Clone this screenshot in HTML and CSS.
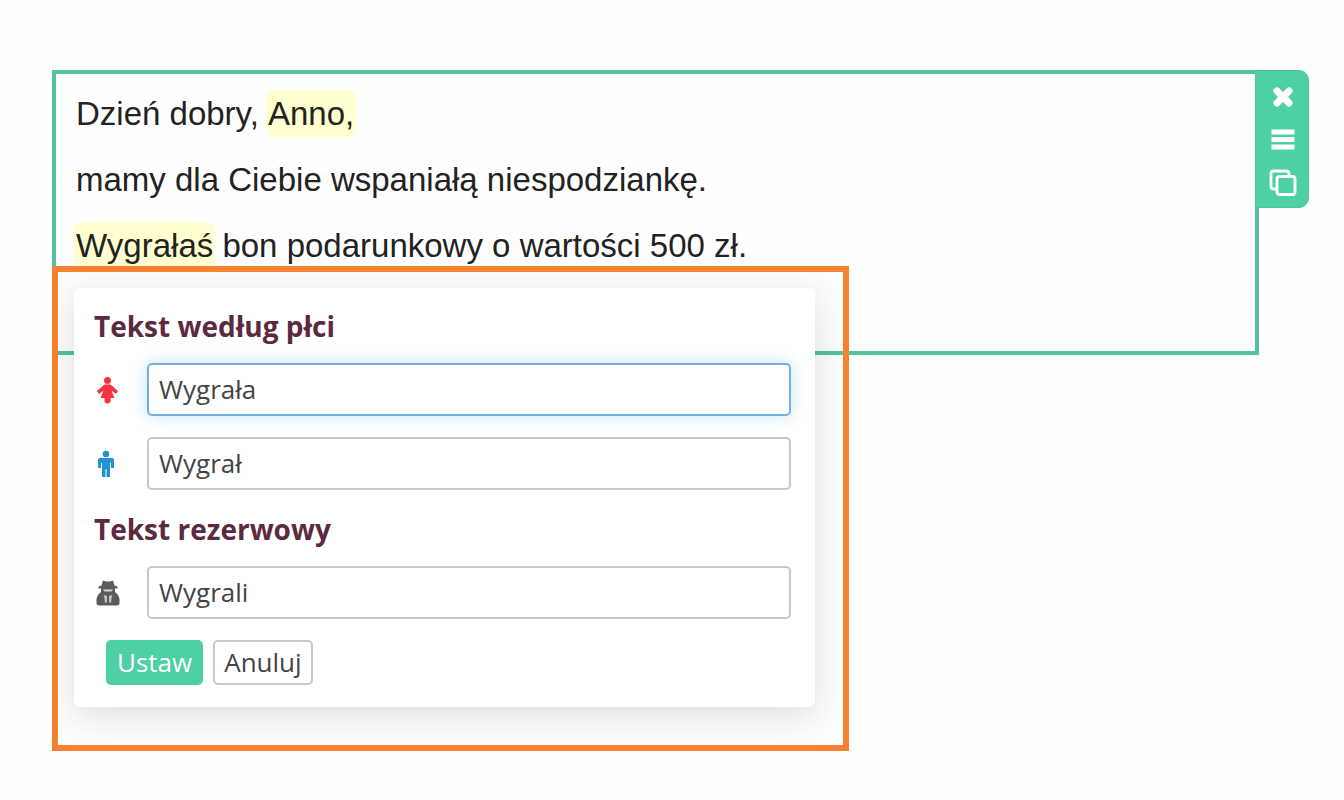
FILE: index.html
```
<!DOCTYPE html>
<html lang="pl">
<head>
    <meta charset="UTF-8">
    <meta name="viewport" content="width=device-width, initial-scale=1.0">
    <title>Tekst według płci</title>
    <link rel="stylesheet" href="styles.css">
</head>
<body>
    <main class="editor">
        <div class="block">
            <p>Dzień dobry, <mark>Anno,</mark></p>
            <p>mamy dla Ciebie wspaniałą niespodziankę.</p>
            <p><mark>Wygrałaś</mark> bon podarunkowy o wartości 500 zł.</p>
        </div>

        <div class="toolbar">
            <button type="button" aria-label="Usuń">
                <svg width="28" height="28" viewBox="0 0 28 28">
                    <path d="M8 8 20 20M20 8 8 20" stroke="#fff" stroke-width="7" stroke-linecap="round"/>
                </svg>
            </button>
            <button type="button" aria-label="Menu">
                <svg width="28" height="28" viewBox="0 0 28 28">
                    <path d="M2.5 6h23M2.5 13.5h23M2.5 21h23" stroke="#fff" stroke-width="5"/>
                </svg>
            </button>
            <button type="button" aria-label="Kopiuj">
                <svg width="28" height="28" viewBox="0 0 28 28" fill="none" stroke="#fff" stroke-width="2.8">
                    <path d="M7 20H4.500a2.500 2.500 0 0 1-2.500-2.500v-13A2.500 2.500 0 0 1 4.500 2h13A2.500 2.500 0 0 1 20 4.500V6"/>
                    <rect x="8" y="7.5" width="18" height="18" rx="2.5"/>
                </svg>
            </button>
        </div>

        <div class="frame">
            <form class="popup">
                <h2>Tekst według płci</h2>
                <div class="row">
                    <label for="female" aria-label="Kobieta">
                        <svg width="26" height="28" viewBox="0 0 26 28" fill="#f5333f">
                            <circle cx="13.5" cy="4.5" r="3.5"/>
                            <path d="M10.500 8.500h6l7.500 6.500-2 3-4.500-3.500L20.500 22h-4v4.500H15v1h-3v-1h-1.500V22h-4l3-7.500L5 18l-2-3z"/>
                        </svg>
                    </label>
                    <input type="text" id="female" class="active" value="Wygrała">
                </div>
                <div class="row">
                    <label for="male" aria-label="Mężczyzna">
                        <svg width="22" height="28" viewBox="0 0 22 28" fill="#2492cf">
                            <circle cx="12" cy="4" r="3.3"/>
                            <path d="M6 8h12q2 0 2 2v8h-3v-5h-1v14h-3.500v-8h-1v8H8V13H7v5H4v-8q0-2 2-2z"/>
                        </svg>
                    </label>
                    <input type="text" id="male" value="Wygrał">
                </div>
                <h2>Tekst rezerwowy</h2>
                <div class="row">
                    <label for="fallback" aria-label="Płeć nieznana">
                        <svg width="28" height="28" viewBox="0 0 28 28" fill="#5b5c5e">
                            <path d="M9 1.500 12 2.500h4l3-1 1.500 5 3 1v2h-19v-2l3-1z"/>
                            <path d="M7 9h14v4q4.500 3 4.500 8v3.500q0 2-2.500 2H5q-2.500 0-2.500-2V21q0-5 4.500-8z"/>
                            <path d="M9 10.500h10l-1.500 2h-7z" fill="#d4d4d4"/>
                            <path d="m10 16 3 1v6l-2 1zm8 0-3 1v6l2 1z" fill="#c4c4c4"/>
                        </svg>
                    </label>
                    <input type="text" id="fallback" value="Wygrali">
                </div>
                <div class="actions">
                    <button type="button" class="primary">Ustaw</button>
                    <button type="button">Anuluj</button>
                </div>
            </form>
        </div>
    </main>
</body>
</html>
```
FILE: styles.css
```
*{
    margin: 0;
    padding: 0;
    box-sizing: border-box;
}
body{
    background-color: #fefefe;
    min-height: 100vh;
    padding: 70px 85px 48px 52px;
}
.editor{
    position: relative;
}
.block{
    min-height: 285px;
    border: 4px solid #51c49c;
    padding: 7px 20px;
    font-family: "Liberation Sans", Arial, sans-serif;
    font-size: 33px;
    line-height: 66px;
    color: #222;
}
.block mark{
    background-color: #ffffcf;
    color: inherit;
    border-radius: 8px;
    padding: 5px 2px;
    margin: 0 -2px;
}
.toolbar{
    position: absolute;
    top: 0;
    left: calc(100% - 4px);
    display: flex;
    flex-direction: column;
    gap: 15px;
    padding: 12px 11px 10px 13px;
    background-color: #4dd0a5;
    border: 1px solid #48c79d;
    border-radius: 0 10px 10px 0;
}
.toolbar button{
    display: flex;
    background: none;
    border: none;
    cursor: pointer;
}
/* frame around the popup, overlaps the bottom of the text block */
.frame{
    position: relative;
    width: 66%;
    margin-top: -89px;
    border: 6px solid #f58230;
    padding: 16px 28px 38px 16px;
    overflow: hidden;
}
.popup{
    background-color: #fff;
    border-radius: 6px;
    box-shadow: 0 8px 36px rgba(0, 0, 0, 0.14);
    padding: 20px 24px 22px 20px;
    font-family: "Open Sans", sans-serif;
    color: #444;
}
.popup h2{
    font-size: 28px;
    line-height: 36px;
    color: #5c2a3e;
    margin-bottom: 19px;
}
.row{
    display: flex;
    align-items: center;
    margin-bottom: 21px;
}
.row label{
    display: flex;
    width: 53px;
}
.row input{
    flex: 1;
    min-width: 0;
    height: 53px;
    padding: 0 10px 2px;
    border: 2px solid #c8c8c8;
    border-radius: 5px;
    background-color: #fff;
    font: inherit;
    font-size: 26px;
    color: inherit;
}
.row .active{
    border-color: #74afe0;
    box-shadow: 0 0 16px #c3e4fb;
    outline: none;
}
.actions{
    display: flex;
    gap: 10px;
    padding-left: 12px;
}
.actions button{
    height: 45px;
    padding: 0 9px 2px;
    border: 2px solid #c8c8c8;
    border-radius: 5px;
    background-color: #fff;
    font: inherit;
    font-size: 26px;
    line-height: 36px;
    color: inherit;
    cursor: pointer;
}
.actions .primary{
    background-color: #4dd0a5;
    border-color: #4dd0a5;
    color: #fff;
}
```
